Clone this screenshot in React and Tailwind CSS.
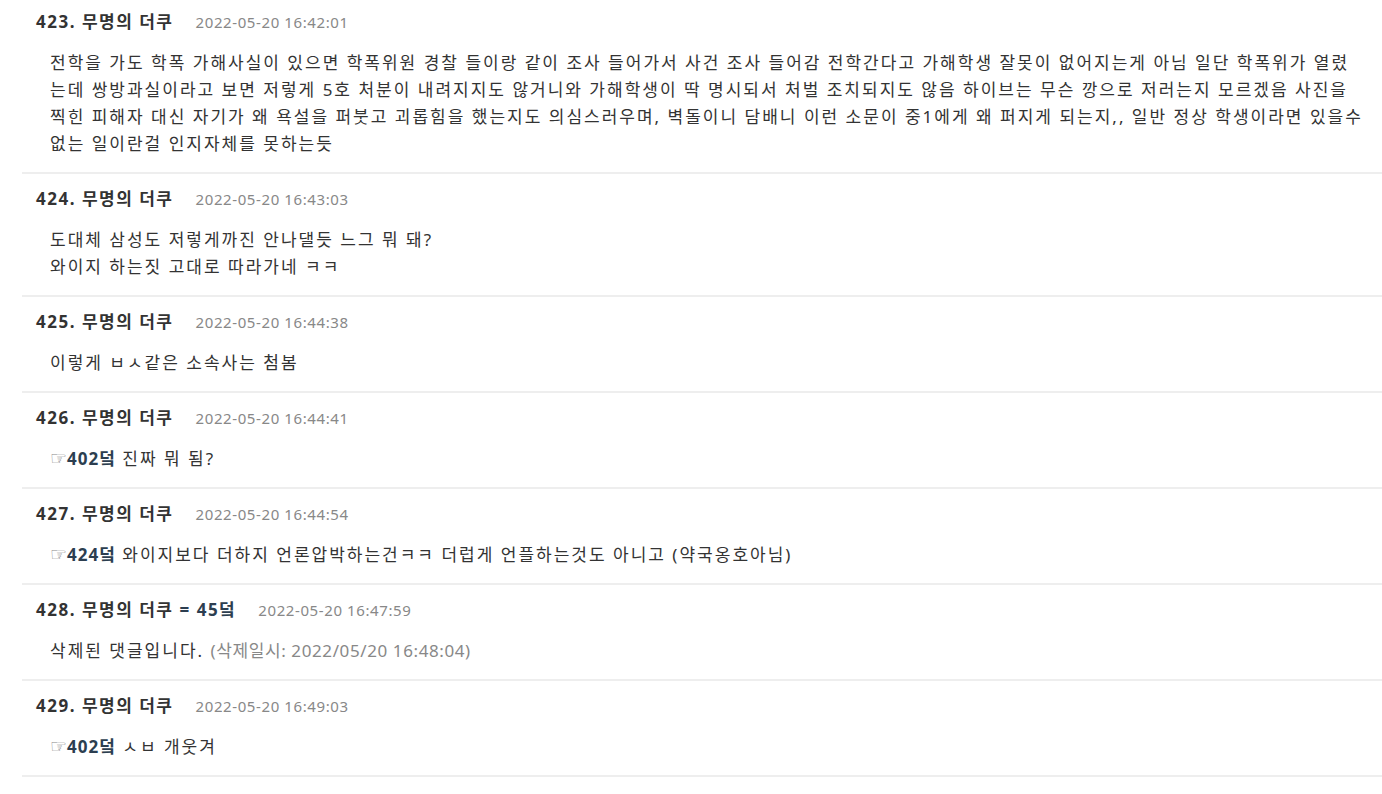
import React from 'react';

const comments = [
  {
    no: 423,
    time: '2022-05-20 16:42:01',
    lines: [
      '전학을 가도 학폭 가해사실이 있으면 학폭위원 경찰 들이랑 같이 조사 들어가서 사건 조사 들어감 전학간다고 가해학생 잘못이 없어지는게 아님 일단 학폭위가 열렸',
      '는데 쌍방과실이라고 보면 저렇게 5호 처분이 내려지지도 않거니와 가해학생이 딱 명시되서 처벌 조치되지도 않음 하이브는 무슨 깡으로 저러는지 모르겠음 사진을',
      '찍힌 피해자 대신 자기가 왜 욕설을 퍼붓고 괴롭힘을 했는지도 의심스러우며, 벽돌이니 담배니 이런 소문이 중1에게 왜 퍼지게 되는지,, 일반 정상 학생이라면 있을수',
      '없는 일이란걸 인지자체를 못하는듯',
    ],
  },
  {
    no: 424,
    time: '2022-05-20 16:43:03',
    lines: ['도대체 삼성도 저렇게까진 안나댈듯 느그 뭐 돼?', '와이지 하는짓 고대로 따라가네 ㅋㅋ'],
  },
  { no: 425, time: '2022-05-20 16:44:38', lines: ['이렇게 ㅂㅅ같은 소속사는 첨봄'] },
  { no: 426, time: '2022-05-20 16:44:41', reply: '402덬', lines: [' 진짜 뭐 됨?'] },
  { no: 427, time: '2022-05-20 16:44:54', reply: '424덬', lines: [' 와이지보다 더하지 언론압박하는건ㅋㅋ 더럽게 언플하는것도 아니고 (약국옹호아님)'] },
  { no: 428, time: '2022-05-20 16:47:59', tag: '45덬', deleted: '(삭제일시: 2022/05/20 16:48:04)', lines: ['삭제된 댓글입니다. '] },
  { no: 429, time: '2022-05-20 16:49:03', reply: '402덬', lines: [' ㅅㅂ 개웃겨'] },
];

function Comment({ c, first }) {
  return (
    <div className={`border-b-2 border-[#eeeeee] pb-[15px] ${first ? 'pt-[9px]' : 'pt-3'}`}>
      <div className="flex items-center h-[26px] px-[14px] whitespace-nowrap">
        <span className="font-bold text-[17px] tracking-[1.5px] text-[#333]">{c.no}. 무명의 더쿠</span>
        {c.tag && (
          <span className="ml-[6px] font-bold text-[17px] tracking-[1.5px] text-[#2c3e50]">= {c.tag}</span>
        )}
        <span className="ml-[22px] text-[15px] text-[#888] tracking-[0.6px]">{c.time}</span>
      </div>
      <div className="mt-[14px] pl-[28px] text-[17px] tracking-[2px] leading-[27px] text-[#333]">
        {c.lines.map((line, i) => (
          <div key={i} className="whitespace-pre">
            {c.reply && i === 0 && (
              <>
                <span className="text-[#888] text-[19px] leading-none tracking-normal font-['DejaVu_Sans',sans-serif]">☞</span>
                <span className="font-bold tracking-[1px] text-[#2c3e50]">{c.reply}</span>
              </>
            )}
            {line}
            {c.deleted && <span className="text-[#888] tracking-[0.6px]">{c.deleted}</span>}
          </div>
        ))}
      </div>
    </div>
  );
}

export default function App() {
  return (
    <div className="min-h-screen bg-white pl-[22px] font-['Noto_Sans','Noto_Sans_CJK_KR',sans-serif]">
      {comments.map((c, i) => (
        <Comment key={c.no} c={c} first={i === 0} />
      ))}
    </div>
  );
}
